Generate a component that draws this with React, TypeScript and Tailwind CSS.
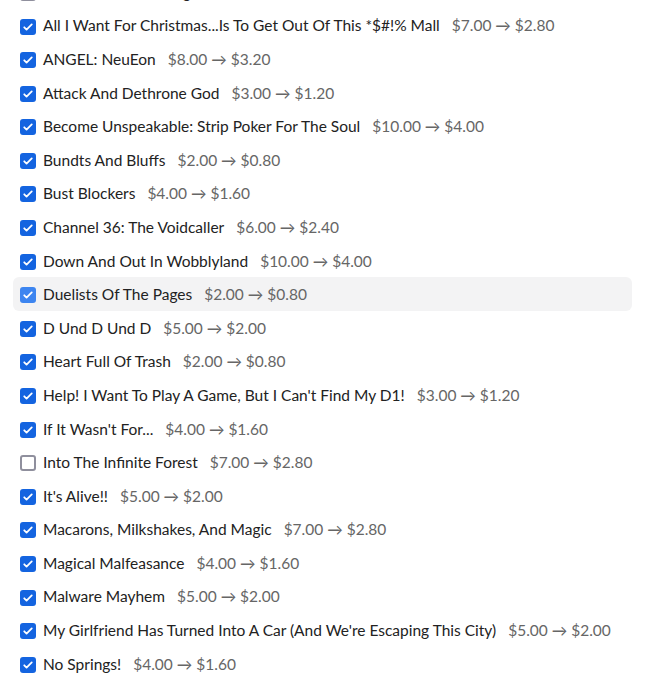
import React from "react";

type Item = {
  title: string;
  from: string;
  to: string;
  checked: boolean;
};

const items: Item[] = [
  { title: "A Hatful Of Old Things", from: "$3.00", to: "$1.20", checked: false },
  { title: "All I Want For Christmas...Is To Get Out Of This *$#!% Mall", from: "$7.00", to: "$2.80", checked: true },
  { title: "ANGEL: NeuEon", from: "$8.00", to: "$3.20", checked: true },
  { title: "Attack And Dethrone God", from: "$3.00", to: "$1.20", checked: true },
  { title: "Become Unspeakable: Strip Poker For The Soul", from: "$10.00", to: "$4.00", checked: true },
  { title: "Bundts And Bluffs", from: "$2.00", to: "$0.80", checked: true },
  { title: "Bust Blockers", from: "$4.00", to: "$1.60", checked: true },
  { title: "Channel 36: The Voidcaller", from: "$6.00", to: "$2.40", checked: true },
  { title: "Down And Out In Wobblyland", from: "$10.00", to: "$4.00", checked: true },
  { title: "Duelists Of The Pages", from: "$2.00", to: "$0.80", checked: true },
  { title: "D Und D Und D", from: "$5.00", to: "$2.00", checked: true },
  { title: "Heart Full Of Trash", from: "$2.00", to: "$0.80", checked: true },
  { title: "Help! I Want To Play A Game, But I Can't Find My D1!", from: "$3.00", to: "$1.20", checked: true },
  { title: "If It Wasn't For...", from: "$4.00", to: "$1.60", checked: true },
  { title: "Into The Infinite Forest", from: "$7.00", to: "$2.80", checked: false },
  { title: "It's Alive!!", from: "$5.00", to: "$2.00", checked: true },
  { title: "Macarons, Milkshakes, And Magic", from: "$7.00", to: "$2.80", checked: true },
  { title: "Magical Malfeasance", from: "$4.00", to: "$1.60", checked: true },
  { title: "Malware Mayhem", from: "$5.00", to: "$2.00", checked: true },
  { title: "My Girlfriend Has Turned Into A Car (And We're Escaping This City)", from: "$5.00", to: "$2.00", checked: true },
  { title: "No Springs!", from: "$4.00", to: "$1.60", checked: true },
  { title: "Odd Jobs", from: "$3.00", to: "$1.20", checked: true },
];

const Check = ({ checked, hover }: { checked: boolean; hover: boolean }) => {
  if (!checked) {
    return (
      <span className="w-4 h-4 shrink-0 rounded-[3px] border-2 border-[#8f8f9d] bg-white" />
    );
  }
  return (
    <span
      className={`w-4 h-4 shrink-0 rounded-[3px] flex items-center justify-center ${
        hover ? "bg-[#3d85f0]" : "bg-[#1464e0]"
      }`}
    >
      <svg viewBox="0 0 16 16" className="w-3 h-3" fill="none">
        <path
          d="M3 8.4l3.1 3L13 4.6"
          stroke="white"
          strokeWidth="2.4"
          strokeLinecap="round"
          strokeLinejoin="round"
        />
      </svg>
    </span>
  );
};

export default function App() {
  const [hovered] = React.useState(9);
  const [state, setState] = React.useState(items.map((i) => i.checked));

  return (
    <div
      className="h-[680px] overflow-hidden bg-white"
      style={{ fontFamily: "Lato, 'Noto Sans', sans-serif" }}
    >
      <div className="-mt-[25.4px] pl-[13px] pr-[20px]">
        {items.map((item, index) => (
          <label
            key={"item-" + index}
            className={`flex items-center h-[33.6px] px-[7px] gap-[7px] rounded-md cursor-pointer ${
              index == hovered ? "bg-[#f3f3f4]" : ""
            }`}
            onClick={() =>
              setState((s) => s.map((v, i) => (i == index ? !v : v)))
            }
          >
            <span className="pt-[3px] flex">
              <Check checked={state[index]} hover={index == hovered} />
            </span>
            <span className="pt-[2px] text-[15.5px] text-[#222222] whitespace-nowrap">
              {item.title}
            </span>
            <span className="pt-[2px] ml-[5px] text-[15.5px] text-[#666666] whitespace-nowrap">
              {item.from}
              {" \u2192 "}
              {item.to}
            </span>
          </label>
        ))}
      </div>
    </div>
  );
}
